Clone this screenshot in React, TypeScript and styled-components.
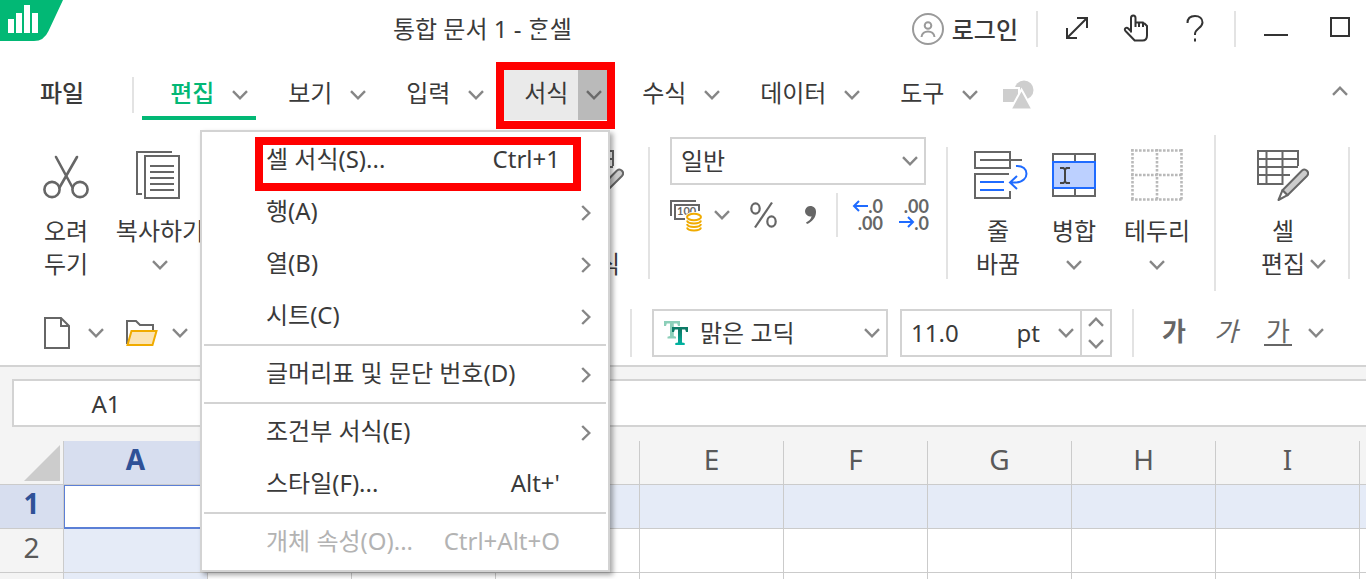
import React from "react";
import styled, { createGlobalStyle, css } from "styled-components";

const ink = "#3a3a3a";
const iconInk = "#666666";
const line = "#d3d3d3";
const softLine = "#e3e3e3";
const green = "#02b875";
const blue = "#1f6bff";
const gridLine = "#cbcbcb";

const GlobalStyle = createGlobalStyle`
  * { box-sizing: border-box; }
  html, body { margin: 0; }
  body, button, input, select, table {
    font-family: "Noto Sans", "Noto Sans CJK KR", sans-serif;
    font-size: 24px;
    line-height: 33px;
    color: ${ink};
  }
  button {
    border: 0;
    padding: 0;
    margin: 0;
    background: none;
    white-space: nowrap;
  }
  svg { display: block; flex: none; }
`;

const Page = styled.div`
  position: relative;
  display: flex;
  flex-direction: column;
  height: 100vh;
  overflow: hidden;
  background: #fff;
`;

/* ---------- shared parts ---------- */

const Divider = styled.span<{ $h: number }>`
  flex: none;
  width: 2px;
  height: ${(p) => p.$h}px;
  background: ${softLine};
`;

const ChevronSvg = styled.svg<{ $turn?: number }>`
  transform: rotate(${(p) => p.$turn ?? 0}deg);
`;

const Chevron = ({ turn, color = "#868686" }: { turn?: number; color?: string }) => (
  <ChevronSvg $turn={turn} width="16" height="10" viewBox="0 0 16 10" fill="none" stroke={color} strokeWidth="2.4" aria-hidden>
    <path d="M1 1.2 8 8.3 15 1.2" />
  </ChevronSvg>
);

const ArrowButton = styled.button`
  display: flex;
  align-items: center;
  justify-content: center;
  flex: none;
  width: 16px;
  height: 32px;
`;

/* ---------- title bar ---------- */

const TitleBar = styled.header`
  display: flex;
  align-items: center;
  flex: none;
  height: 58px;
  padding-right: 2px;
`;

const Logo = styled.svg`
  align-self: flex-start;
`;

const DocTitle = styled.h1`
  flex: 1;
  margin: 0;
  padding: 0 10px 2px 0;
  text-align: center;
  font-size: 24px;
  font-weight: 400;
  white-space: nowrap;
`;

const Account = styled.button`
  display: flex;
  align-items: center;
  gap: 8px;
  margin-right: 18px;
  font-weight: 500;
`;

const QuickButtons = styled.div`
  display: flex;
  margin: 0 10px 0 9px;
`;

const QuickButton = styled.button`
  display: flex;
  align-items: center;
  justify-content: center;
  width: 59px;
  height: 48px;
  padding-bottom: 2px;
`;

const WindowButtons = styled.div`
  display: flex;
  gap: 16px;
  margin-left: 16px;
`;

const WindowButton = styled(QuickButton)`
  width: 48px;
  padding-bottom: 4px;
`;

/* ---------- menu bar ---------- */

const MenuBar = styled.nav`
  display: flex;
  align-items: center;
  flex: none;
  height: 72px;
  padding: 12px 18px 10px 40px;
`;

const FileButton = styled.button`
  margin-right: 48px;
  padding-bottom: 5px;
  font-weight: 500;
`;

const Tabs = styled.div`
  display: flex;
  margin: 0 13px 0 8px;
`;

const TabBox = styled.div<{ $state?: "active" | "open" }>`
  position: relative;
  display: flex;
  height: 50px;
  ${(p) =>
    p.$state === "active" &&
    css`
      &::after {
        content: "";
        position: absolute;
        left: 0;
        right: 4px;
        bottom: 0;
        height: 4px;
        background: ${green};
      }
    `}
  ${(p) =>
    p.$state === "open" &&
    css`
      background: #eaeaea;
      &::after {
        content: "";
        position: absolute;
        inset: -8px -1px -9px 0;
        border: 8px solid #f00;
      }
    `}
`;

const TabLabel = styled.button<{ $active?: boolean; $long?: boolean }>`
  width: ${(p) => (p.$long ? 104 : 82)}px;
  padding: 0 0 5px 28px;
  text-align: left;
  color: ${(p) => (p.$active ? green : ink)};
  font-weight: ${(p) => (p.$active ? 500 : 400)};
`;

const TabArrow = styled.button<{ $open?: boolean }>`
  display: flex;
  align-items: center;
  width: 36px;
  padding-left: 8px;
  background: ${(p) => (p.$open ? "#bababa" : "transparent")};
`;

const Collapse = styled(ArrowButton)`
  margin-left: auto;
  padding-bottom: 8px;
`;

/* ---------- ribbon ---------- */

const Ribbon = styled.section`
  flex: none;
  border-bottom: 2px solid ${line};
`;

const MainRow = styled.div`
  display: flex;
  height: 163px;
`;

const Clipboard = styled.div`
  display: flex;
  flex: none;
  gap: 18px;
  width: 566px;
  padding: 20px 0 0 34px;
`;

const Tools = styled.div<{ $left?: number; $right?: number }>`
  display: flex;
  flex: none;
  gap: 14px;
  padding-top: 20px;
  margin-left: ${(p) => p.$left ?? 0}px;
  margin-right: ${(p) => p.$right ?? 18}px;
`;

const Tool = styled.button<{ $w: number }>`
  display: flex;
  flex-direction: column;
  align-items: center;
  align-self: flex-start;
  flex: none;
  width: ${(p) => p.$w}px;
`;

const ToolIcon = styled.span`
  display: flex;
  align-items: center;
  justify-content: center;
  height: 50px;
  margin-bottom: 14px;
`;

const ToolArrow = styled.span`
  display: flex;
  align-items: center;
  height: 35px;
`;

const SplitTool = styled.div`
  display: flex;
  align-self: flex-start;
  align-items: flex-end;
  gap: 1px;
`;

const RowDivider = styled(Divider)`
  margin-top: 17px;
`;

const TallDivider = styled(Divider)`
  margin-top: 5px;
`;

const NumberGroup = styled.div`
  display: flex;
  flex-direction: column;
  flex: none;
  gap: 8px;
  width: 258px;
  margin: 7px 18px 0 20px;
`;

const NumberRow = styled.div`
  display: flex;
  align-items: center;
  height: 44px;
`;

const IconButton = styled.button<{ $ml?: number }>`
  flex: none;
  margin-left: ${(p) => p.$ml ?? 0}px;
`;

const NumberArrow = styled(ArrowButton)`
  margin-left: 10px;
`;

const NumberDivider = styled(Divider)`
  margin: 0 14px 0 18px;
`;

const SelectBox = styled.div<{ $w: number }>`
  position: relative;
  flex: none;
  width: ${(p) => p.$w}px;
  height: 48px;
`;

const Select = styled.select<{ $pad: number }>`
  appearance: none;
  width: 100%;
  height: 100%;
  padding: 0 36px 2px ${(p) => p.$pad}px;
  border: 2px solid ${line};
  border-radius: 0;
  background: #fff;
`;

const SelectArrow = styled.span`
  position: absolute;
  right: 8px;
  top: 19px;
  pointer-events: none;
`;

const SelectIcon = styled.span`
  position: absolute;
  left: 11px;
  top: 11px;
  pointer-events: none;
`;

const FormatRow = styled.div`
  display: flex;
  align-items: center;
  padding: 16px 0 8px;
`;

const FileTools = styled.div`
  display: flex;
  align-items: center;
  flex: none;
  width: 630px;
  padding-left: 44px;
`;

const FileArrow = styled(ArrowButton)<{ $ml: number; $mr?: number }>`
  margin: 0 ${(p) => p.$mr ?? 0}px 0 ${(p) => p.$ml}px;
`;

const Fields = styled.div`
  display: flex;
  gap: 12px;
  margin: 0 20px;
`;

const SizeField = styled.div`
  display: flex;
  align-items: center;
  width: 212px;
  height: 48px;
  border: 2px solid ${line};
`;

const SizeInput = styled.input`
  flex: 1;
  min-width: 0;
  padding: 0 0 2px 9px;
  border: 0;
  outline: 0;
`;

const Unit = styled.span`
  margin-right: 18px;
  padding-bottom: 2px;
`;

const Spinner = styled.div`
  display: flex;
  flex-direction: column;
  width: 30px;
  height: 44px;
  margin-left: 6px;
  border-left: 2px solid ${line};
`;

const SpinButton = styled.button`
  display: flex;
  flex: 1;
  align-items: center;
  justify-content: center;
`;

const StyleButtons = styled.div`
  display: flex;
  margin: 0 4px 0 14px;
`;

const StyleButton = styled.button<{ $kind: "bold" | "italic" | "underline" }>`
  width: 52px;
  height: 48px;
  padding-bottom: 4px;
  font-size: 26px;
  color: ${iconInk};
  font-weight: ${(p) => (p.$kind === "bold" ? 700 : 400)};
  font-style: ${(p) => (p.$kind === "italic" ? "italic" : "normal")};
`;

const Underlined = styled.span`
  display: inline-block;
  width: 28px;
  line-height: 26px;
  border-bottom: 2px solid ${iconInk};
`;

/* ---------- formula bar and sheet ---------- */

const FormulaBar = styled.div`
  display: flex;
  flex: none;
  padding: 12px 0 14px 12px;
  background: #f4f4f4;
`;

const NameBox = styled.input`
  width: 190px;
  height: 48px;
  padding: 0 4px 0 0;
  border: 2px solid ${line};
  border-right: 0;
  border-radius: 0;
  text-align: center;
`;

const FormulaInput = styled.input`
  flex: 1;
  min-width: 0;
  height: 48px;
  border: 2px solid ${line};
  border-right: 0;
  border-radius: 0;
`;

const SheetArea = styled.main`
  flex: 1;
  min-height: 0;
  overflow: hidden;
  background: #f4f4f4;
`;

const Sheet = styled.table`
  width: 1504px;
  table-layout: fixed;
  border-collapse: separate;
  border-spacing: 0;
  font-size: 28px;
`;

const cellEdges = css`
  height: 44px;
  padding: 0;
  border-right: 1px solid ${gridLine};
  border-bottom: 1px solid ${gridLine};
`;

const Corner = styled.td`
  ${cellEdges}
  width: 64px;
  padding-left: 24px;
`;

const Head = styled.th<{ $on?: boolean }>`
  ${cellEdges}
  padding-bottom: 7px;
  background: ${(p) => (p.$on ? "#d7deef" : "#f4f4f4")};
  color: ${(p) => (p.$on ? "#2f5197" : "#595959")};
  font-weight: ${(p) => (p.$on ? 700 : 400)};
`;

const Cell = styled.td<{ $tint?: boolean; $active?: boolean }>`
  ${cellEdges}
  background: ${(p) => (p.$tint ? "#e5ebf7" : "#fff")};
  ${(p) =>
    p.$active &&
    css`
      box-shadow: inset 0 0 0 1px #5b7fd6, 0 1px 0 #5b7fd6;
      border-bottom-color: #5b7fd6;
    `}
`;

/* ---------- drop-down menu ---------- */

const Menu = styled.ul`
  position: absolute;
  left: 200px;
  top: 130px;
  width: 410px;
  margin: 0;
  padding: 2px;
  list-style: none;
  background: #fff;
  border: 2px solid ${line};
  box-shadow: 3px 3px 5px rgba(0, 0, 0, 0.35);
`;

const MenuSeparator = styled.li`
  height: 2px;
  margin: 2px 0;
  background: ${line};
`;

const MenuRow = styled.li`
  position: relative;
`;

const MenuButton = styled.button`
  display: flex;
  align-items: center;
  width: 100%;
  height: 52px;
  padding: 0 12px 0 62px;
  &:disabled { color: #b3b3b3; }
`;

const MenuText = styled.span`
  padding-bottom: 3px;
`;

const Shortcut = styled(MenuText)`
  margin-left: auto;
  margin-right: 34px;
`;

const SubArrow = styled.span`
  margin-left: auto;
  padding-top: 2px;
`;

const Marker = styled.span`
  position: absolute;
  inset: 3px 25px -5px 51px;
  border: 8px solid #f00;
  pointer-events: none;
`;

/* ---------- icons ---------- */

const ScissorsIcon = () => (
  <svg width="48" height="48" viewBox="0 0 48 48" fill="none" stroke={iconInk} strokeWidth="2.6">
    <circle cx="10" cy="38.500" r="7.600" />
    <circle cx="38" cy="38.500" r="7.600" />
    <path d="M14 6 30.500 36.500M35 6 17.500 36.500" strokeLinecap="round" />
  </svg>
);

const CopyIcon = () => (
  <svg width="48" height="48" viewBox="0 0 48 48" fill="none" stroke={iconInk} strokeWidth="2">
    <path d="M36 1H1v42h5M9 5h34v42H9zM14 15h24M14 21h24M14 27h24M14 33h24M14 39h24" />
  </svg>
);

const PencilTableIcon = () => (
  <svg width="52" height="52" viewBox="0 0 52 52" fill="none" stroke={iconInk} strokeWidth="2">
    <path d="M41 17V2H1v33h24.500V31M1 10h40M1 18h40M1 26h32M9.500 2v33M25.500 2v29" />
    <path d="M45 21.500a3.700 3.700 0 0 1 5.200 5.200L30.500 46.200l-5-5z" fill="#cccccc" strokeLinejoin="round" />
    <path d="M25.500 41.200 21.500 51l9-4.800z" fill="#fff" strokeLinejoin="round" />
  </svg>
);

const WrapIcon = () => (
  <svg width="60" height="48" viewBox="0 0 60 48" fill="none" stroke={iconInk} strokeWidth="2">
    <path d="M42 8V1H7v16h35v-7M12 9h42" />
    <path d="M41 23H7v24h35v-7" />
    <g stroke={blue}>
      <path d="M12 31h24M12 39h24" />
      <path d="M48 15c14-1 14 16 0 16.500h-6M49 25l-7 6.500 7 6.500" />
    </g>
  </svg>
);

const MergeIcon = () => (
  <svg width="44" height="44" viewBox="0 0 44 44" fill="none" stroke={iconInk} strokeWidth="2">
    <path d="M1 1h42v42H1zM23 1v8M23 35v8" />
    <path d="M1 9h42v26H1z" fill="#bcd0ff" stroke={blue} />
    <path d="M8 15h3.500l1.500 1.500 1.500-1.500H18M8 30h3.500l1.500-1.500 1.500 1.500H18M13 16v13" stroke="#444" />
  </svg>
);

const BorderIcon = () => (
  <svg width="52" height="52" viewBox="0 0 52 52" fill="none" stroke="#b9b9b9" strokeWidth="2.6" strokeDasharray="2.600 1.400">
    <path d="M0 1.500h52M0 26h52M0 50.500h52M1.500 0v52M26 0v52M50.500 0v52" />
  </svg>
);

const NewIcon = () => (
  <svg width="26" height="32" viewBox="0 0 26 32" fill="none" stroke={iconInk} strokeWidth="2">
    <path d="M17 1H1v30h24V9zM17 1v8h8" />
  </svg>
);

const OpenIcon = () => (
  <svg width="32" height="26" viewBox="0 0 32 26" fill="none" strokeWidth="2">
    <path d="M1 24V1h9l4 4h13v6" stroke={iconInk} />
    <path d="M5.500 11h25l-4 14H1.500z" fill="#fbe4b5" stroke="#f0ab00" />
  </svg>
);

const MoneyIcon = () => (
  <svg width="34" height="34" viewBox="0 0 34 34" fill="none" stroke={iconInk} strokeWidth="2">
    <path d="M1 18V3h25M29 13V7H5v14h10" />
    <text x="7" y="17" fontFamily="Lato, sans-serif" fontSize="11" fontWeight="700" fill={iconInk} stroke="none">100</text>
    <ellipse cx="24" cy="19" rx="9" ry="5" fill="#fff" stroke="none" />
    <g stroke="#f0ab00">
      <ellipse cx="24" cy="19" rx="7" ry="3.200" />
      <path d="M17 22.500c1 4 13 4 14 0M17 26c1 4 13 4 14 0M17 29.500c1 4 13 4 14 0" />
    </g>
  </svg>
);

const PercentIcon = () => (
  <svg width="28" height="28" viewBox="0 0 28 28" fill="none" stroke={iconInk} strokeWidth="2.200">
    <ellipse cx="5.500" cy="7.500" rx="4.200" ry="5.200" />
    <ellipse cx="21.500" cy="20.500" rx="4.200" ry="5.200" />
    <path d="M22 1.500 5 26.500" />
  </svg>
);

const CommaIcon = () => (
  <svg width="14" height="20" viewBox="0 0 14 20" fill={iconInk}>
    <path d="M6 1c4 0 6 2.500 6 6 0 5.500-4 10-9 12l-1-1.500c3-1.500 5-3.500 5.600-6.300A5.200 5.200 0 1 1 6 1z" />
  </svg>
);

const DecimalIcon = ({ more }: { more?: boolean }) => (
  <svg width="32" height="44" viewBox="0 0 32 44" fontFamily="Lato, sans-serif" fontSize="18" fontWeight="700" fill={iconInk}>
    <text x="31" y="20" textAnchor="end">{more ? ".0" : ".00"}</text>
    <text x="31" y="37" textAnchor="end">{more ? ".00" : ".0"}</text>
    {more ? (
      <path d="M16 13H2M7 8l-5 5 5 5" fill="none" stroke={blue} strokeWidth="2" />
    ) : (
      <path d="M1 29h14M10 24l5 5-5 5" fill="none" stroke={blue} strokeWidth="2" />
    )}
  </svg>
);

const FontIcon = () => (
  <svg width="26" height="26" viewBox="0 0 26 26">
    <defs>
      <linearGradient id="stem" x1="0" y1="0" x2="0" y2="1">
        <stop offset="0.2" stopColor="#0c7a66" />
        <stop offset="1" stopColor="#00b5a3" />
      </linearGradient>
    </defs>
    <path d="M1 1h16v5h-2l-.8-2.500h-3.400V16l2.200.8V18.500H4.500v-1.700L7 16V3.500H3.800L3 6H1z" fill="#8ccfb9" />
    <path d="M9 7h16v5h-2l-.8-2.500h-3.200V22.500l2.700.6V25h-9.400v-1.900l2.700-.6V9.500h-3.200L11 12H9z" fill="url(#stem)" />
  </svg>
);

const UserIcon = () => (
  <svg width="32" height="32" viewBox="0 0 32 32" fill="none" stroke="#9a9a9a" strokeWidth="2">
    <circle cx="16" cy="16" r="15" />
    <circle cx="16" cy="12.500" r="3.300" />
    <path d="M9.500 24c.5-7.500 12.500-7.500 13 0" />
  </svg>
);

const ExpandIcon = () => (
  <svg width="24" height="24" viewBox="0 0 24 24" fill="none" stroke="#333" strokeWidth="2">
    <path d="M2 22 22 2M12 2h10v10M2 12v10h10" />
  </svg>
);

const HandIcon = () => (
  <svg width="26" height="28" viewBox="0 0 26 28" fill="none" stroke="#333" strokeWidth="2" strokeLinejoin="round">
    <path d="M8 18.500V4c0-3.400 4.500-3.400 4.500 0v9M12.500 8.500H16V13M16 8.500h4V13M20 9.500h1.500L24 12v9.500c0 3-1.500 5-4.500 5h-7.800L3 17.500c-3-3 .5-4.800 2.500-2.800L8 17.200" />
  </svg>
);

const HelpIcon = () => (
  <svg width="20" height="28" viewBox="0 0 20 28" fill="none" stroke="#333" strokeWidth="2">
    <path d="M2.500 9C2.500 4.500 5.500 2 10 2s7.500 2.500 7.500 6.500c0 5.500-7.500 6-7.500 11.500v1M10 24.500v3" />
  </svg>
);

const ShapesIcon = () => (
  <svg width="32" height="30" viewBox="0 0 32 30" fill="#cecece">
    <circle cx="21" cy="10" r="9.500" />
    <path d="M-1 8h17v15H-1z" stroke="#fff" strokeWidth="2" />
    <path d="M18.500 9.500 29.500 29.500h-22z" stroke="#fff" strokeWidth="2" />
  </svg>
);

/* ---------- data ---------- */

const tabs: { label: string; state?: "active" | "open" }[] = [
  { label: "편집", state: "active" },
  { label: "보기" },
  { label: "입력" },
  { label: "서식", state: "open" },
  { label: "수식" },
  { label: "데이터" },
  { label: "도구" },
];

type Entry = { label: string; keys?: string; sub?: boolean; off?: boolean; marked?: boolean } | null;

const entries: Entry[] = [
  { label: "셀 서식(S)...", keys: "Ctrl+1", marked: true },
  { label: "행(A)", sub: true },
  { label: "열(B)", sub: true },
  { label: "시트(C)", sub: true },
  null,
  { label: "글머리표 및 문단 번호(D)", sub: true },
  null,
  { label: "조건부 서식(E)", sub: true },
  { label: "스타일(F)...", keys: "Alt+'" },
  null,
  { label: "개체 속성(O)...", keys: "Ctrl+Alt+O", off: true },
];

const columns = ["A", "B", "C", "D", "E", "F", "G", "H", "I", "J"];

const FormatMenu = () => (
  <Menu role="menu">
    {entries.map((e, i) =>
      e === null ? (
        <MenuSeparator key={i} role="separator" />
      ) : (
        <MenuRow key={i} role="none">
          <MenuButton role="menuitem" disabled={e.off}>
            <MenuText>{e.label}</MenuText>
            {e.keys && <Shortcut>{e.keys}</Shortcut>}
            {e.sub && <SubArrow><Chevron turn={-90} /></SubArrow>}
          </MenuButton>
          {e.marked && <Marker />}
        </MenuRow>
      )
    )}
  </Menu>
);

export default function App() {
  return (
    <Page>
      <GlobalStyle />
      <TitleBar>
        <Logo width="63" height="41" viewBox="0 0 63 41">
          <path d="M0 0h63L48.500 31Q44 41 34 41H0z" fill={green} />
          <path d="M8 19h6v14H8zM16 13h6v20h-6zM24 5h6v28h-6zM32 13h6v20h-6z" fill="#fff" />
        </Logo>
        <DocTitle>통합 문서 1 - ᄒᆞᆫ셀</DocTitle>
        <Account><UserIcon />로그인</Account>
        <Divider $h={36} />
        <QuickButtons>
          <QuickButton aria-label="전체 화면"><ExpandIcon /></QuickButton>
          <QuickButton aria-label="터치"><HandIcon /></QuickButton>
          <QuickButton aria-label="도움말"><HelpIcon /></QuickButton>
        </QuickButtons>
        <Divider $h={36} />
        <WindowButtons>
          <WindowButton aria-label="최소화">
            <svg width="24" height="20" viewBox="0 0 24 20"><path d="M0 17h24v2H0z" fill="#333" /></svg>
          </WindowButton>
          <WindowButton aria-label="최대화">
            <svg width="20" height="20" viewBox="0 0 20 20"><path d="M1 1h18v18H1z" fill="none" stroke="#333" strokeWidth="2" /></svg>
          </WindowButton>
        </WindowButtons>
      </TitleBar>

      <MenuBar>
        <FileButton>파일</FileButton>
        <Divider $h={36} />
        <Tabs>
          {tabs.map((t) => (
            <TabBox key={t.label} $state={t.state}>
              <TabLabel $active={t.state === "active"} $long={t.label.length > 2}>{t.label}</TabLabel>
              <TabArrow $open={t.state === "open"} aria-label={`${t.label} 메뉴`}>
                <Chevron color={t.state === "open" ? "#6a6a6a" : undefined} />
              </TabArrow>
            </TabBox>
          ))}
        </Tabs>
        <ShapesIcon />
        <Collapse aria-label="접기"><Chevron turn={180} /></Collapse>
      </MenuBar>

      <Ribbon>
        <MainRow>
          <Clipboard>
            <Tool $w={64}><ToolIcon><ScissorsIcon /></ToolIcon><span>오려</span><span>두기</span></Tool>
            <Tool $w={88}><ToolIcon><CopyIcon /></ToolIcon><span>복사하기</span><ToolArrow><Chevron /></ToolArrow></Tool>
          </Clipboard>
          <Tools>
            <Tool $w={64}><ToolIcon><PencilTableIcon /></ToolIcon><span>셀</span><span>서식</span></Tool>
          </Tools>
          <RowDivider $h={132} />
          <NumberGroup>
            <SelectBox $w={256}>
              <Select $pad={9} aria-label="표시 형식" defaultValue="일반"><option>일반</option></Select>
              <SelectArrow><Chevron /></SelectArrow>
            </SelectBox>
            <NumberRow>
              <IconButton aria-label="통화"><MoneyIcon /></IconButton>
              <NumberArrow aria-label="통화 목록"><Chevron /></NumberArrow>
              <IconButton $ml={20} aria-label="백분율"><PercentIcon /></IconButton>
              <IconButton $ml={26} aria-label="쉼표"><CommaIcon /></IconButton>
              <NumberDivider $h={44} />
              <IconButton aria-label="자릿수 늘림"><DecimalIcon more /></IconButton>
              <IconButton $ml={14} aria-label="자릿수 줄임"><DecimalIcon /></IconButton>
            </NumberRow>
          </NumberGroup>
          <RowDivider $h={132} />
          <Tools $left={18}>
            <Tool $w={64}><ToolIcon><WrapIcon /></ToolIcon><span>줄</span><span>바꿈</span></Tool>
            <Tool $w={60}><ToolIcon><MergeIcon /></ToolIcon><span>병합</span><ToolArrow><Chevron /></ToolArrow></Tool>
            <Tool $w={78}><ToolIcon><BorderIcon /></ToolIcon><span>테두리</span><ToolArrow><Chevron /></ToolArrow></Tool>
          </Tools>
          <TallDivider $h={156} />
          <Tools $left={41} $right={22}>
            <SplitTool>
              <Tool $w={52}><ToolIcon><PencilTableIcon /></ToolIcon><span>셀</span><span>편집</span></Tool>
              <ArrowButton aria-label="셀 편집 목록"><Chevron /></ArrowButton>
            </SplitTool>
          </Tools>
          <RowDivider $h={132} />
        </MainRow>

        <FormatRow>
          <FileTools>
            <IconButton aria-label="새 문서"><NewIcon /></IconButton>
            <FileArrow $ml={18} $mr={22} aria-label="새 문서 목록"><Chevron /></FileArrow>
            <IconButton aria-label="열기"><OpenIcon /></IconButton>
            <FileArrow $ml={14} aria-label="열기 목록"><Chevron /></FileArrow>
          </FileTools>
          <Divider $h={48} />
          <Fields>
            <SelectBox $w={236}>
              <Select $pad={46} aria-label="글꼴" defaultValue="맑은 고딕"><option>맑은 고딕</option></Select>
              <SelectIcon><FontIcon /></SelectIcon>
              <SelectArrow><Chevron /></SelectArrow>
            </SelectBox>
            <SizeField>
              <SizeInput aria-label="글자 크기" defaultValue="11.0" />
              <Unit>pt</Unit>
              <ArrowButton aria-label="크기 목록"><Chevron /></ArrowButton>
              <Spinner>
                <SpinButton aria-label="크게"><Chevron turn={180} /></SpinButton>
                <SpinButton aria-label="작게"><Chevron /></SpinButton>
              </Spinner>
            </SizeField>
          </Fields>
          <Divider $h={48} />
          <StyleButtons>
            <StyleButton $kind="bold">가</StyleButton>
            <StyleButton $kind="italic">가</StyleButton>
            <StyleButton $kind="underline"><Underlined>가</Underlined></StyleButton>
          </StyleButtons>
          <ArrowButton aria-label="밑줄 목록"><Chevron /></ArrowButton>
        </FormatRow>
      </Ribbon>

      <FormulaBar>
        <NameBox aria-label="셀 주소" defaultValue="A1" />
        <FormulaInput aria-label="수식" />
      </FormulaBar>

      <SheetArea>
        <Sheet>
          <thead>
            <tr>
              <Corner>
                <svg width="36" height="36" viewBox="0 0 36 36"><path d="M36 0v36H0z" fill="#cccccc" /></svg>
              </Corner>
              {columns.map((c) => <Head key={c} scope="col" $on={c === "A"}>{c}</Head>)}
            </tr>
          </thead>
          <tbody>
            {[1, 2, 3].map((r) => (
              <tr key={r}>
                <Head scope="row" $on={r === 1}>{r}</Head>
                {columns.map((c) => {
                  const active = r === 1 && c === "A";
                  return <Cell key={c} $active={active} $tint={!active && (r === 1 || c === "A")} />;
                })}
              </tr>
            ))}
          </tbody>
        </Sheet>
      </SheetArea>
      <FormatMenu />
    </Page>
  );
}
